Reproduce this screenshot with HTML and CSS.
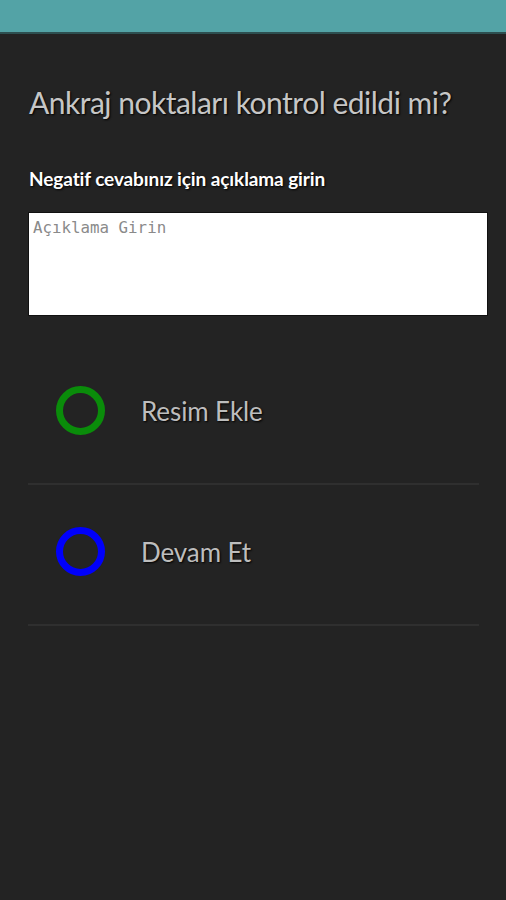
FILE: index.html
```html
<!DOCTYPE html>
<html lang="tr">
<head>
<meta charset="utf-8">
<link rel="stylesheet" href="styles.css">
</head>
<body>
<header class="appbar"></header>
<main class="content">
  <h1 class="question">Ankraj noktaları kontrol edildi mi?</h1>
  <label class="label" for="desc">Negatif cevabınız için açıklama girin</label>
  <textarea id="desc" class="desc" placeholder="Açıklama Girin"></textarea>
  <ul class="actions">
    <li class="action">
      <span class="ring ring-green"></span>
      <span class="action-text">Resim Ekle</span>
    </li>
    <li class="action">
      <span class="ring ring-blue"></span>
      <span class="action-text">Devam Et</span>
    </li>
  </ul>
</main>
</body>
</html>
```
FILE: styles.css
```css
* { box-sizing: border-box; }
html, body {
  margin: 0;
  padding: 0;
  background: #232323;
  height: 100%;
}
body {
  font-family: Lato, "Noto Sans", sans-serif;
}
.appbar {
  height: 34px;
  background: #53a3a6;
  border-bottom: 2px solid #2d4f50;
}
.content {
  padding: 0 28px 0 28px;
  display: flex;
  flex-direction: column;
}
.question {
  margin: 50px 0 0 1px;
  font-size: 30px;
  font-weight: 400;
  letter-spacing: -0.5px;
  line-height: 36px;
  color: #c6c6c6;
  text-shadow: 1px 1px 2px #000;
}
.label {
  margin: 48px 0 0 1px;
  font-size: 19px;
  font-weight: 700;
  letter-spacing: -0.1px;
  line-height: 22px;
  color: #fff;
  text-shadow: 1px 1px 2px #000;
}
.desc {
  display: block;
  margin: 22px 0 0 0;
  width: 460px;
  height: 104px;
  border: 1px solid #111;
  background: #fff;
  padding: 6px 4px;
  resize: none;
  font-family: "DejaVu Sans Mono", monospace;
  font-size: 15.8px;
  line-height: 18px;
  color: #333;
}
.desc::placeholder { color: #8a8a8a; }
.actions {
  list-style: none;
  margin: 28px 0 0 0;
  padding: 0;
  width: 451px;
}
.action {
  height: 141px;
  display: flex;
  align-items: center;
  border-bottom: 2px solid #2f2f2f;
  padding-left: 28px;
  padding-bottom: 6px;
}
.ring {
  width: 49px;
  height: 49px;
  border-radius: 50%;
  border: 7px solid;
  flex: none;
}
.ring-green { border-color: #0a8c0a; }
.ring-blue { border-color: #0000fb; }
.action-text {
  margin-left: 36px;
  font-size: 26px;
  color: #bdbdbd;
  letter-spacing: -0.1px;
  text-shadow: 1px 1px 2px #000;
}
```
